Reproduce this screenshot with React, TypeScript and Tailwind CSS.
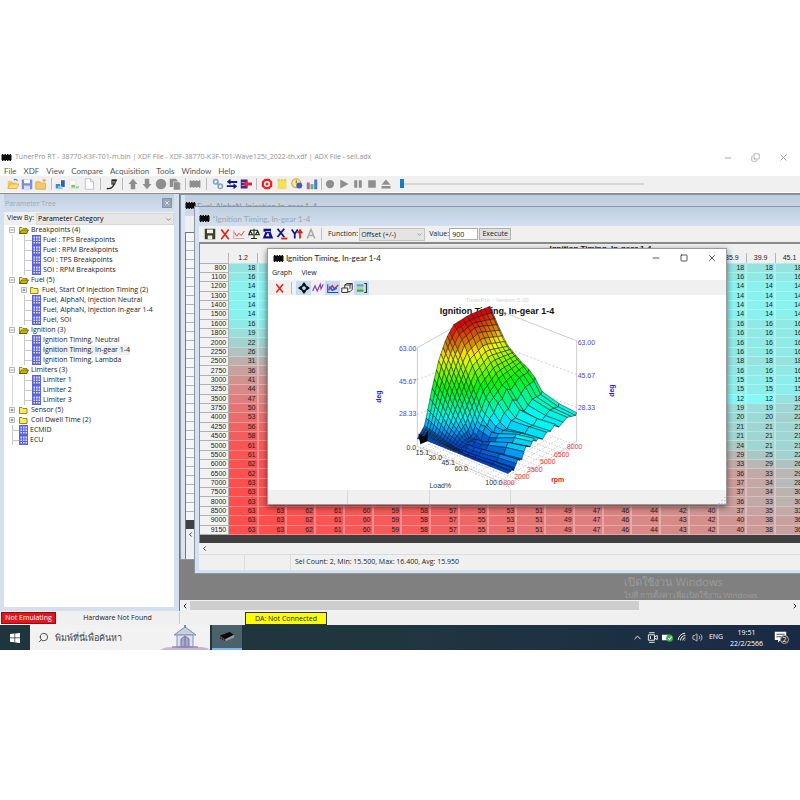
import React from 'react';
import { Search, ChevronDown, ChevronUp, ChevronLeft, ChevronRight, Minus, X, Square, Copy, Volume2, Wifi } from 'lucide-react';

const RPM = [800, 1100, 1200, 1300, 1400, 1500, 1600, 1800, 2000, 2250, 2500, 2750, 3000, 3250, 3500, 3750, 4000, 4250, 4500, 5000, 5500, 6000, 6500, 7000, 7500, 8000, 8500, 9000, 9150];
const COL_FIRST = [18, 16, 14, 14, 14, 14, 16, 19, 22, 26, 31, 36, 41, 44, 47, 50, 53, 56, 58, 61, 61, 62, 62, 63, 63, 63, 63, 63, 63];
const COL_35 = [18, 16, 14, 14, 14, 14, 16, 16, 16, 16, 18, 16, 15, 15, 12, 19, 20, 21, 21, 24, 29, 33, 36, 37, 37, 36, 37, 40, 40];
const COL_39 = [18, 16, 14, 14, 14, 14, 16, 16, 16, 16, 18, 16, 15, 15, 12, 19, 20, 21, 21, 21, 25, 29, 33, 34, 34, 33, 35, 38, 38];
const COL_45 = [18, 16, 14, 14, 14, 14, 16, 16, 16, 16, 18, 16, 15, 15, 18, 21, 22, 21, 21, 21, 22, 26, 29, 28, 30, 30, 33, 36, 36];
const FULL_ROWS: Record<number, number[]> = {
  8500: [63, 63, 62, 61, 60, 59, 58, 57, 55, 53, 51, 49, 47, 46, 44, 42, 40, 37, 35, 33],
  9000: [63, 63, 62, 61, 60, 59, 58, 57, 55, 53, 51, 49, 47, 46, 44, 43, 42, 40, 38, 36],
  9150: [63, 63, 62, 61, 60, 59, 58, 57, 55, 53, 51, 49, 47, 46, 44, 43, 42, 40, 38, 36],
};
const HEADERS = ['1.2', '', '', '', '', '', '', '', '', '', '', '', '', '', '', '', '', '35.9', '39.9', '45.1'];

const mix = (a: number[], b: number[], t: number) => `rgb(${a.map((c, i) => Math.round(c + (b[i] - c) * t)).join(',')})`;

const cellColor = (v: number) => {
  const cold = [130, 250, 246];
  const mid = [188, 178, 176];
  const hot = [254, 78, 78];
  return v < 30 ? mix(cold, mid, (v - 12) / 18) : mix(mid, hot, (v - 30) / 33);
};

const getRow = (i: number): { value: number; text: string }[] => {
  const full = FULL_ROWS[RPM[i]];
  if (full) return full.map((value) => ({ value, text: String(value) }));
  return HEADERS.map((_, c) => {
    if (c === 0) return { value: COL_FIRST[i], text: String(COL_FIRST[i]) };
    if (c === 17) return { value: COL_35[i], text: String(COL_35[i]) };
    if (c === 18) return { value: COL_39[i], text: String(COL_39[i]) };
    if (c === 19) return { value: COL_45[i], text: String(COL_45[i]) };
    return { value: COL_FIRST[i] + ((COL_35[i] - COL_FIRST[i]) * c) / 17, text: '' };
  });
};

/* ---------- surface plot ---------- */

const U_KEYS = [0, 0.1, 0.2, 0.36, 0.5, 0.58, 0.7, 1];
const V_KEYS = [0, 0.1, 0.2, 0.3, 0.4, 0.5, 0.7, 1];
const SURFACE = [
  [15, 16, 16, 16, 16, 16, 16, 16],
  [20, 19, 17, 15, 15, 15, 16, 17],
  [37, 31, 24, 17, 16, 17, 18, 20],
  [51, 42, 33, 17, 15, 17, 21, 24],
  [60, 51, 41, 25, 19, 19, 22, 24],
  [65, 58, 48, 33, 25, 22, 23, 24],
  [66, 61, 52, 40, 31, 26, 24, 25],
  [65, 56, 48, 42, 38, 31, 28, 26],
];
const U_GRID = [0, 0.03, 0.06, 0.09, 0.12, 0.15, 0.18, 0.21, 0.24, 0.27, 0.3, 0.33, 0.36, 0.4, 0.45, 0.52, 0.6, 0.8, 1];
const V_GRID = RPM.map((r) => (r - 800) / 8350);
const RIPPLE = [0, 0, 0, 1, 0, -1, 0, 1, 2, 0, -1, 1, 2, 0, -1, 1, 2, 0, 1, -1, 1, 0, 2, -1, 0, 1, 0, -1, 0];

const locate = (keys: number[], x: number) => {
  let i = 0;
  while (i < keys.length - 2 && x > keys[i + 1]) i++;
  return { i, t: (x - keys[i]) / (keys[i + 1] - keys[i]) };
};

const heightAt = (u: number, v: number) => {
  const a = locate(U_KEYS, u);
  const b = locate(V_KEYS, v);
  const lo = SURFACE[b.i][a.i] * (1 - a.t) + SURFACE[b.i][a.i + 1] * a.t;
  const hi = SURFACE[b.i + 1][a.i] * (1 - a.t) + SURFACE[b.i + 1][a.i + 1] * a.t;
  return lo * (1 - b.t) + hi * b.t;
};

const project = (u: number, v: number, z: number) => {
  const x = 417 + 91 * u + 73 * v - 4 * u * v;
  const y = 447 + 37 * u - 37 * v - 5 * u * v - (z - 11) * 1.92;
  return [x, y];
};

const toPoints = (list: number[][]) => list.map((p) => `${p[0].toFixed(1)},${p[1].toFixed(1)}`).join(' ');

const buildSurface = () => {
  const cells: { points: string; fill: string }[] = [];
  const z = (ui: number, vi: number) => heightAt(U_GRID[ui], V_GRID[vi]) + (U_GRID[ui] > 0.4 ? RIPPLE[vi] : 0);
  for (let vi = V_GRID.length - 2; vi >= 0; vi--) {
    for (let ui = 0; ui < U_GRID.length - 1; ui++) {
      const corners = [[ui, vi], [ui + 1, vi], [ui + 1, vi + 1], [ui, vi + 1]];
      const avg = corners.reduce((s, c) => s + z(c[0], c[1]), 0) / 4;
      const hue = Math.max(0, Math.min(222, 240 - ((avg - 12) / 52) * 240));
      const light = avg < 19 ? 42 : avg > 54 ? 44 : 49;
      cells.push({
        points: toPoints(corners.map((c) => project(U_GRID[c[0]], V_GRID[c[1]], z(c[0], c[1])))),
        fill: `hsl(${hue.toFixed(0)} 98% ${light}%)`,
      });
    }
  }
  return cells;
};

const CELLS = buildSurface();
const STEPS = [0, 0.08, 0.16, 0.24, 0.32, 0.4, 0.48, 0.56, 0.64, 0.72, 0.8, 0.88, 1];

const SurfacePlot = () => (
  <svg viewBox="267 295 460 196" className="block w-full bg-white" fontFamily='"Liberation Sans", Arial, sans-serif' fontSize="7" role="img" aria-label="Ignition timing surface">
    <text x="497" y="302" textAnchor="middle" fill="#d4d4d4" fontSize="6">TunerPro - Version 5.00</text>
    <text x="497" y="314" textAnchor="middle" fill="#111" fontSize="9" fontWeight="700">Ignition Timing, In-gear 1-4</text>
    <g stroke="#a9a9a9" strokeWidth="0.6" fill="none">
      <path d="M417 447V348L488 308M577 442V341L500 311" />
      <path d="M417 380L440 371M417 415L432 409M577 375L508 349M577 408L550 398" strokeDasharray="2 2" />
      {STEPS.map((s) => (
        <polyline key={`u${s}`} points={toPoints([project(s, 0, 9), project(s, 1, 9)])} strokeDasharray="1.5 1.5" />
      ))}
      {STEPS.map((s) => (
        <polyline key={`v${s}`} points={toPoints([project(0, s, 9), project(1.02, s, 9)])} strokeDasharray="1.5 1.5" />
      ))}
      <path d="M417 447L508 486L577 442" />
    </g>
    <g stroke="#04161c" strokeWidth="0.5" strokeLinejoin="round">
      {CELLS.map((c, i) => (
        <polygon key={i} points={c.points} fill={c.fill} />
      ))}
    </g>
    <path d="M418 434L424 437L428 430L427 442L420 445Z" fill="#05080f" />
    <g fill="#4646e0">
      <text x="416" y="351" textAnchor="end">63.00</text>
      <text x="416" y="384" textAnchor="end">45.67</text>
      <text x="416" y="417" textAnchor="end">28.33</text>
      <text x="578" y="345">63.00</text>
      <text x="578" y="378">45.67</text>
      <text x="578" y="411">28.33</text>
      <text transform="translate(380 397) rotate(-90)" textAnchor="middle" fontSize="7" fontWeight="700" fill="#2222d8">deg</text>
      <text transform="translate(615 391) rotate(-90)" textAnchor="middle" fontSize="7" fontWeight="700" fill="#2222d8">deg</text>
    </g>
    <g fill="#333" textAnchor="middle">
      <text x="411" y="451">0.0</text>
      <text x="422" y="456">15.1</text>
      <text x="435" y="461">30.0</text>
      <text x="448" y="466">45.1</text>
      <text x="461" y="472">60.0</text>
      <text x="494" y="486">100.0</text>
      <text x="440" y="489">Load%</text>
    </g>
    <g fill="#f04040" textAnchor="middle">
      <text x="509" y="486">800</text>
      <text x="522" y="480">2000</text>
      <text x="535" y="473">3500</text>
      <text x="548" y="465">5000</text>
      <text x="562" y="458">6500</text>
      <text x="575" y="450">8000</text>
      <text x="558" y="483" fontWeight="700" fill="#e01818">rpm</text>
    </g>
  </svg>
);

/* ---------- small shared parts ---------- */

const Icon: React.FC<{ children: React.ReactNode; className?: string }> = ({ children, className = 'size-3' }) => (
  <svg viewBox="0 0 16 16" className={`${className} shrink-0`} fill="none" aria-hidden="true">{children}</svg>
);

const Tool: React.FC<{ label: string; active?: boolean; wide?: boolean; children: React.ReactNode }> = ({ label, active, wide, children }) => (
  <button type="button" aria-label={label} className={`flex h-[14px] shrink-0 items-center justify-center ${wide ? 'w-[15px]' : 'w-[14px]'} ${active ? 'bg-[#c4dff5]' : ''}`}>
    <Icon>{children}</Icon>
  </button>
);

const Sep: React.FC<{ className?: string }> = ({ className = 'w-[6px]' }) => (
  <span className={`flex h-3 shrink-0 justify-center ${className}`}><span className="w-px bg-[#bdbdbd]" /></span>
);

const Chip = () => (
  <svg viewBox="0 0 22 14" className="h-[7px] w-[11px] shrink-0" aria-hidden="true">
    <path d="M1 2h20v10H1z" fill="#000" />
    <path d="M2 0h3v14H2zM7 0h3v14H7zM12 0h3v14h-3zM17 0h3v14h-3z" fill="#111" />
  </svg>
);

const GridIcon = () => (
  <svg viewBox="0 0 9 10" className="h-[10px] w-[9px] shrink-0" aria-hidden="true">
    <path d="M0 0h9v10H0z" fill="#5a60e0" />
    <path d="M1.500 1.500h1.500v2h-1.500zM4 1.500h1.500v2H4zM6.500 1.500H8v2H6.500zM1.500 4.500h1.500v1.500h-1.500zM4 4.500h1.500v1.500H4zM6.500 4.500H8v1.500H6.500zM1.500 7h1.500v1.500h-1.500zM4 7h1.500v1.500H4zM6.500 7H8v1.500H6.500z" fill="#dfe3ff" />
  </svg>
);

const FolderIcon: React.FC<{ open?: boolean }> = ({ open }) => (
  <svg viewBox="0 0 20 16" className="h-2 w-[10px] shrink-0" aria-hidden="true">
    <path d="M1 3h5l2 2h8v10H1z" fill="#f5ee62" stroke="#6b6500" strokeWidth="1.500" />
    {open && <path d="M5 8h14l-4 7H1z" fill="#c9b800" stroke="#4c4700" strokeWidth="1.500" />}
  </svg>
);

const MENU = ['File', 'XDF', 'View', 'Compare', 'Acquisition', 'Tools', 'Window', 'Help'];

const MainToolbar = () => (
  <div className="flex h-[17px] items-center border-b border-[#fafafa] bg-[#f0f0f0] pl-[6px]">
    <Tool label="Open"><path d="M1 4h5l2 2h5v8H1z" fill="#f1c65b" /><path d="M4 8h12l-3 6H1z" fill="#ffdc7c" stroke="#d9a536" /><path d="M9 3c2-2 4-1 5 1" stroke="#4d86c6" strokeWidth="1.500" /></Tool>
    <Tool label="Save"><path d="M1 2h14v13H1z" fill="#7b8bd6" /><path d="M4 2h8v5H4z" fill="#fff" /><path d="M4 10h8v5H4z" fill="#d7dcf5" /></Tool>
    <Tool label="Open definition"><path d="M1 5h6l2 2h5v8H1z" fill="#f4c968" stroke="#d9a536" /><path d="M12 1v5M10 3h5" stroke="#d9a536" strokeWidth="1.500" /></Tool>
    <Sep />
    <Tool label="Compare bins"><path d="M1 8h6v6H1z" fill="#3f8ec2" /><path d="M8 3h5v9H8z" fill="#2f5fa8" /><path d="M4 11h6v4H4z" fill="#8fd0d8" /></Tool>
    <Tool label="Difference"><path d="M1 3h8v11H1z" fill="#fff" stroke="#ddd" /><path d="M3 9h5v4H3z" fill="#7fc77f" /><path d="M9 11h4v3H9z" fill="#9ad09a" /></Tool>
    <Tool label="New"><path d="M3 1h7l4 4v10H3z" fill="#fff" stroke="#a9b2c0" /><path d="M10 1v4h4" stroke="#a9b2c0" /></Tool>
    <Sep className="w-[9px]" />
    <Tool label="Emulator"><path d="M7 2h8l-3 7H7z" fill="#4a4f48" /><path d="M1 14c5 1 8-1 10-6M8 3h6" stroke="#222" strokeWidth="1.800" /><path d="M8 5h4" stroke="#9fae9f" /></Tool>
    <Sep className="w-[7px]" />
    <Tool label="Upload"><path d="M8 1l6 7h-3v7H5V8H2z" fill="#8e8e8e" /></Tool>
    <Tool label="Download"><path d="M8 15l6-7h-3V1H5v7H2z" fill="#8e8e8e" /></Tool>
    <Tool label="Verify"><circle cx="8" cy="8" r="7" fill="#8e8e8e" /></Tool>
    <Tool label="Copy"><path d="M1 1h8l2 2v9H1z" fill="#8e8e8e" /><path d="M6 5h7l2 2v9H6z" fill="#8e8e8e" stroke="#d5d5d5" /></Tool>
    <Sep />
    <Tool label="Chip"><path d="M1 4h14v8H1z" fill="#8e8e8e" /><path d="M2 3v10M6 3v10M10 3v10M14 3v10" stroke="#8e8e8e" strokeWidth="2" /></Tool>
    <Sep className="w-[9px]" />
    <Tool label="Link"><circle cx="5" cy="5" r="3" stroke="#7da2c9" strokeWidth="2" /><circle cx="11" cy="11" r="3" stroke="#8aa4bf" strokeWidth="2" /><path d="M6 6l4 4" stroke="#7da2c9" strokeWidth="2" /></Tool>
    <Tool label="Swap"><path d="M1 5l5-4v3h9v2.500H6V9zM15 11l-5 4v-3H1V9.500h9V7z" fill="#16168a" /></Tool>
    <Tool label="Import"><path d="M1 2h9v12H1z" fill="#3a2a8a" /><path d="M2 6h7M2 10h7" stroke="#e8a0c0" /><path d="M4 8l6-5v3h6v4h-6v3z" fill="#e02048" /></Tool>
    <Sep />
    <Tool wide label="Acquire"><path d="M5 1h6l4 4v6l-4 4H5l-4-4V5z" fill="#e8262a" /><circle cx="8" cy="8" r="4" fill="#fff" /><circle cx="8" cy="8" r="2" fill="#e8262a" /></Tool>
    <Tool wide label="Notes"><path d="M2 2h12v13H2z" fill="#f2e061" /><path d="M4 1v3M8 1v3M12 1v3" stroke="#c9b130" /></Tool>
    <Tool wide label="Gauge"><circle cx="7" cy="7" r="6" fill="#f7e9a0" stroke="#d8a72c" strokeWidth="1.500" /><circle cx="11" cy="10" r="4" fill="#3f5fbf" /><path d="M7 3v4" stroke="#333" /></Tool>
    <Tool wide label="Histogram"><path d="M1 6h4v9H1z" fill="#b65fb0" /><path d="M6 8h4v7H6z" fill="#5dbf58" /><path d="M11 2h4v13h-4z" fill="#4b77d6" /></Tool>
    <Sep className="w-1" />
    <Tool label="Record"><circle cx="8" cy="8" r="5.500" fill="#8e8e8e" /></Tool>
    <Tool label="Play"><path d="M3 2l11 6-11 6z" fill="#8e8e8e" /></Tool>
    <Tool label="Pause"><path d="M3 3h4v10H3zM9 3h4v10H9z" fill="#8e8e8e" /></Tool>
    <Tool label="Stop"><path d="M3 3h10v10H3z" fill="#8e8e8e" /></Tool>
    <Tool label="Eject"><path d="M8 2l6 7H2zM2 10.500h12V14H2z" fill="#8e8e8e" /></Tool>
    <input
      type="range"
      aria-label="Playback position"
      defaultValue={0}
      className="ml-[7px] h-3 w-[244px] appearance-none bg-transparent [&::-webkit-slider-runnable-track]:h-[2px] [&::-webkit-slider-runnable-track]:bg-[#d6d6d6] [&::-webkit-slider-thumb]:-mt-[4px] [&::-webkit-slider-thumb]:h-[9px] [&::-webkit-slider-thumb]:w-1 [&::-webkit-slider-thumb]:appearance-none [&::-webkit-slider-thumb]:bg-[#1979ca]"
    />
  </div>
);

/* ---------- parameter tree ---------- */

type Node = { label: string; kind: 'open' | 'closed' | 'table'; children?: Node[]; selected?: boolean };

const TREE: Node[] = [
  { label: 'Breakpoints (4)', kind: 'open', children: [
    { label: 'Fuel : TPS Breakpoints', kind: 'table' },
    { label: 'Fuel : RPM Breakpoints', kind: 'table' },
    { label: 'SOI : TPS Breakpoints', kind: 'table' },
    { label: 'SOI : RPM Breakpoints', kind: 'table' },
  ] },
  { label: 'Fuel (5)', kind: 'open', children: [
    { label: 'Fuel, Start Of Injection Timing (2)', kind: 'closed' },
    { label: 'Fuel, AlphaN, Injection Neutral', kind: 'table' },
    { label: 'Fuel, AlphaN, Injection In-gear 1-4', kind: 'table' },
    { label: 'Fuel, SOI', kind: 'table' },
  ] },
  { label: 'Ignition (3)', kind: 'open', children: [
    { label: 'Ignition Timing, Neutral', kind: 'table' },
    { label: 'Ignition Timing, In-gear 1-4', kind: 'table', selected: true },
    { label: 'Ignition Timing, Lambda', kind: 'table' },
  ] },
  { label: 'Limiters (3)', kind: 'open', children: [
    { label: 'Limiter 1', kind: 'table' },
    { label: 'Limiter 2', kind: 'table' },
    { label: 'Limiter 3', kind: 'table' },
  ] },
  { label: 'Sensor (5)', kind: 'closed' },
  { label: 'Coil Dwell Time (2)', kind: 'closed' },
  { label: 'ECMID', kind: 'table' },
  { label: 'ECU', kind: 'table' },
];

const Expander: React.FC<{ open?: boolean; label: string }> = ({ open, label }) => (
  <button type="button" aria-label={`Toggle ${label}`} className="block size-[6px] shrink-0">
    <svg viewBox="0 0 6 6" className="size-[6px]" aria-hidden="true">
      <path d="M.5.5h5v5h-5z" fill="#fff" stroke="#b4b4b4" />
      <path d={open ? 'M1.500 3h3' : 'M1.500 3h3M3 1.500v3'} stroke="#666" strokeWidth="0.800" />
    </svg>
  </button>
);

const TreeRow: React.FC<{ node: Node; child?: boolean }> = ({ node, child }) => (
  <div className="flex h-[10px] items-center">
    {child && <span className="mr-2 h-[10px] w-px bg-[#d5d5d5]" />}
    {node.kind === 'table' ? (
      <span className={`flex h-[10px] items-center border-l border-[#c8c8c8] ${child ? 'ml-[3px] w-2' : 'w-[7px]'}`}><span className="h-px w-full bg-[#c8c8c8]" /></span>
    ) : (
      <span className={child ? 'mr-[3px]' : '-ml-[3px] mr-[4px]'}><Expander open={node.kind === 'open'} label={node.label} /></span>
    )}
    {node.kind === 'table' ? <GridIcon /> : <FolderIcon open={node.kind === 'open'} />}
    <span className={`ml-[2px] whitespace-nowrap leading-[10px] ${node.selected ? 'bg-[#f0f0f0]' : ''}`}>{node.label}</span>
  </div>
);

const ParameterTree = () => (
  <aside className="flex w-[180px] shrink-0 flex-col border-r border-[#777] bg-[#d5e0ee] pb-1 pl-1 pr-[5px]">
    <div className="flex h-[18px] items-center justify-between bg-linear-to-b from-[#bfcddd] to-[#d5e0ee] pr-[2px]">
      <h2 className="pl-px pt-[2px] text-[7px] text-[#9aa8ba]">Parameter Tree</h2>
      <button type="button" aria-label="Close panel" className="flex size-[10px] items-center justify-center border border-[#8693a6] bg-[#98a5b8] text-white"><X size={6} strokeWidth={3} /></button>
    </div>
    <div className="flex h-[13px] items-center bg-[#f0f0f0]">
      <label htmlFor="view-by" className="w-[32px] pl-[3px] text-[7px] whitespace-nowrap">View By:</label>
      <div className="relative flex-1">
        <select id="view-by" className="block h-3 w-full appearance-none border border-[#d6d6d6] bg-[#e6e6e6] px-px text-[7px] leading-[10px] text-black">
          <option>Parameter Category</option>
        </select>
        <ChevronDown size={7} className="pointer-events-none absolute right-[2px] top-[3px] text-[#555]" />
      </div>
    </div>
    <ul className="flex-1 bg-white pl-2 text-[7px] text-[#222]">
      {TREE.map((node) => (
        <li key={node.label}>
          <TreeRow node={node} />
          {node.children && (
            <ul>
              {node.children.map((c) => (
                <li key={c.label}><TreeRow node={c} child /></li>
              ))}
            </ul>
          )}
        </li>
      ))}
    </ul>
  </aside>
);

/* ---------- MDI windows ---------- */

const FuelWindow = () => (
  <section className="absolute -right-3 left-0 top-0 flex h-[366px] flex-col border border-[#8b97a6] bg-[#d9e4f2] pl-1">
    <div className="flex h-[21px] shrink-0 items-center gap-px bg-linear-to-b from-[#c0cddc] to-[#cfdbe9] font-['Lato','Open_Sans',sans-serif] text-[8px] text-[#8292a5]">
      <Chip />
      <h2>Fuel, AlphaN, Injection In-gear 1-4</h2>
    </div>
    <div className="h-4 shrink-0 bg-[#f0f0f0]" />
    <div className="flex flex-1 flex-col border-l border-t border-[#777]">
      <div className="h-[287px] bg-[repeating-linear-gradient(to_bottom,#f6f6f6_0_8px,#b4b4b4_8px_9px)]" />
      <div className="h-[9px] bg-[#404040]" />
      <div className="flex h-[11px] items-center bg-[#f0f0f0] pl-px"><ChevronLeft size={7} strokeWidth={3} /></div>
      <div className="flex-1 bg-[#f0f0f0]" />
    </div>
  </section>
);

const TableToolbar = () => (
  <div className="flex h-4 shrink-0 items-center bg-[#f0f0f0] pl-1">
    <Tool label="Save table"><path d="M1 1h14v14H1z" fill="#3b421c" /><path d="M4 2h8v5H4z" fill="#f2f2f2" /><path d="M5 10h6v5H5z" fill="#eee" /></Tool>
    <Tool wide label="Close table"><path d="M3 2l10 13M13 2L3 15" stroke="#e3201b" strokeWidth="2.200" /></Tool>
    <Tool label="Plot row"><path d="M1 3v11h14" stroke="#d88" /><path d="M2 6l3 5 3-4 3 3 4-6" stroke="#e04040" strokeWidth="1.300" /></Tool>
    <Tool wide label="Compare"><path d="M8 1v13M3 3h10M4 14h8M3 4L1 9h5L3 4zM13 4l-3 5h5z" stroke="#1d2b1d" strokeWidth="1.500" /></Tool>
    <Tool label="Calculate"><path d="M2 1h10v4H2zM5 4L1 14h14L11 4z" fill="#11118a" /><path d="M8 6l2 5H5z" fill="#fff" /></Tool>
    <Tool label="Edit X axis"><path d="M2 1l9 11M11 1L2 12" stroke="#14148c" strokeWidth="2.500" /><path d="M7 14h8" stroke="#e01c1c" strokeWidth="2.500" /></Tool>
    <Tool wide label="Edit Y axis"><path d="M1 2l4 6 4-6M5 8v6" stroke="#14148c" strokeWidth="2.300" /><path d="M12 14V4M9 7l3-4 3 4" stroke="#e01c1c" strokeWidth="2.300" /></Tool>
    <Tool label="Font"><path d="M3 14L8 2l5 12M5 10h6" stroke="#a8a8a8" strokeWidth="2" /></Tool>
    <Sep className="w-[6px]" />
    <label htmlFor="fn" className="ml-1 text-[7px]">Function:</label>
    <div className="relative ml-px w-[66px]">
      <select id="fn" className="block h-[13px] w-full appearance-none border border-[#c4c4c4] bg-[#e4e4e4] px-px text-[7px] leading-[11px] text-[#222]">
        <option>Offset (+/-)</option>
      </select>
      <ChevronDown size={7} className="pointer-events-none absolute right-[2px] top-[3px] text-[#777]" />
    </div>
    <label htmlFor="val" className="ml-1 w-[20px] whitespace-nowrap text-[7px]">Value:</label>
    <input id="val" type="text" defaultValue="900" className="h-3 w-[29px] border border-[#ababab] bg-white px-[2px] text-[7px] leading-[10px]" />
    <button type="button" className="ml-px h-3 w-8 border border-[#b0b0b0] bg-[#e1e1e1] text-[7px] leading-[10px]">Execute</button>
  </div>
);

const TimingTable = () => (
  <table className="h-[282px] w-[605px] table-fixed border-collapse text-right font-['Liberation_Sans',Arial,sans-serif] text-[7px] leading-[8px] text-[#222]">
    <thead>
      <tr className="h-[10px] bg-[#f0f0f0]">
        <td className="border-r border-[#b5b5b5] p-0" />
        {HEADERS.map((h, i) => (
          <th key={i} scope="col" className="border-r border-[#b5b5b5] p-0 text-center font-normal">{h}</th>
        ))}
      </tr>
    </thead>
    <tbody>
      {RPM.map((rpm, i) => (
        <tr key={rpm}>
          <th scope="row" className="border-y border-r border-[#b0b0b0] bg-[#f2f2f2] p-0 pr-[2px] text-right font-normal">{rpm}</th>
          {getRow(i).map((cell, c) => (
            <td key={c} className="border-y border-r-2 border-white/30 p-0 pr-px" style={{ backgroundColor: cellColor(cell.value) }}>{cell.text}</td>
          ))}
        </tr>
      ))}
    </tbody>
  </table>
);

const IgnitionWindow = () => (
  <section className="absolute -right-5 left-[14px] top-3 flex h-[368px] flex-col border border-[#8b97a6] bg-[#d6e1ef] pb-[3px] pl-1">
    <div className="flex h-[19px] shrink-0 items-center gap-[2px] bg-linear-to-b from-[#bfcedc] to-[#d3dff0] pt-[4px] font-['Lato','Open_Sans',sans-serif] text-[8px] text-[#9aa7b6]">
      <Chip />
      <h2>*Ignition Timing, In-gear 1-4</h2>
    </div>
    <TableToolbar />
    <div className="shrink-0 overflow-hidden border-l border-t-2 border-[#8a8a8a] bg-[#404040] pb-2">
      <div className="h-[9px] bg-[#f0f0f0] pl-[182px] text-center font-['Liberation_Sans',Arial,sans-serif] text-[8px] font-bold leading-[9px]">Ignition Timing, In-gear 1-4</div>
      <TimingTable />
    </div>
    <div className="flex h-[11px] shrink-0 items-center bg-[#f0f0f0] pl-[2px]"><ChevronLeft size={7} strokeWidth={3} /></div>
    <div className="flex flex-1 items-center border-t border-[#dcdcdc] bg-[#f0f0f0] text-[7px]">
      <span className="h-full w-[46px] border-r border-[#dcdcdc]" />
      <span className="h-full w-[46px] border-r border-[#dcdcdc]" />
      <span className="pl-1">Sel Count: 2, Min: 15.500, Max: 16.400, Avg: 15.950</span>
    </div>
  </section>
);

const GraphWindow = () => (
  <section className="absolute left-[87px] top-[54px] w-[460px] border border-[#9a9a9a] bg-white shadow-[0_2px_6px_rgba(0,0,0,0.55)]">
    <div className="flex h-[18px] items-center gap-[2px] pl-[5px] font-['Lato','Open_Sans',sans-serif] text-[8px] text-[#222]">
      <Chip />
      <h2>Ignition Timing, In-gear 1-4</h2>
      <div className="ml-auto flex gap-[18px] pr-[9px] text-[#333]">
        <button type="button" aria-label="Minimize"><Minus size={10} strokeWidth={2} /></button>
        <button type="button" aria-label="Maximize" className="px-px"><Square size={8} strokeWidth={2.5} /></button>
        <button type="button" aria-label="Close"><X size={10} strokeWidth={2} /></button>
      </div>
    </div>
    <div className="flex h-[13px] items-center gap-[9px] pl-1 text-[7px]">
      <button type="button">Graph</button>
      <button type="button">View</button>
    </div>
    <div className="flex h-[15px] items-center bg-[#f0f0f0] pl-[5px]">
      <Tool label="Close graph"><path d="M3 3l9 11M12 3L3 14" stroke="#e3201b" strokeWidth="2" /></Tool>
      <Sep className="w-[9px]" />
      <Tool wide active label="Move"><path d="M8 0l3 4H5zM8 16l3-4H5zM0 8l4-3v6zM16 8l-4-3v6z" fill="#111" /><circle cx="8" cy="8" r="3.500" stroke="#111" strokeWidth="2" /></Tool>
      <Tool label="Trace"><path d="M1 12l3-7 3 7 4-9 1 6 3-6" stroke="#8a3fb8" strokeWidth="1.600" /></Tool>
      <Tool wide active label="Surface"><path d="M1 3v11h14" stroke="#3344bb" strokeWidth="1.500" /><path d="M2 11l5-6 3 4 5-5" stroke="#d02a50" strokeWidth="2" /><path d="M3 6l4 5 6-3" stroke="#3154d8" strokeWidth="2" /></Tool>
      <Tool label="Projection"><path d="M1 8h8v6H1zM5 8V4l3-2h7v8l-3 3H9M5 4h7v5M12 4l3-2" stroke="#333" strokeWidth="1.300" /></Tool>
      <Tool wide active label="Legend"><path d="M1 3h9v3H1z" fill="#56a8c8" /><path d="M1 7h9v2H1z" fill="#c8cf4a" /><path d="M1 10h9v3H1z" fill="#47a060" /><path d="M11 2h3v12h-3" stroke="#333" strokeWidth="1.500" /></Tool>
    </div>
    <SurfacePlot />
    <div className="flex h-[14px] bg-[#f0f0f0]">
      <span className="w-[80px] border-r border-[#d8d8d8]" />
      <span className="w-[82px] border-r border-[#d8d8d8]" />
      <span className="w-[81px] border-r border-[#d8d8d8]" />
      <svg viewBox="0 0 8 8" className="ml-auto size-2 self-end" aria-hidden="true"><path d="M7 1v1M7 4v1M4 4v1M7 7v1M4 7v1M1 7v1" stroke="#aaa" /></svg>
    </div>
  </section>
);

const Workspace = () => (
  <main className="flex min-w-0 flex-1 flex-col">
    <div className="relative h-[406px] overflow-hidden bg-[#808080]">
      <FuelWindow />
      <IgnitionWindow />
      <GraphWindow />
      <div className="absolute left-[444px] top-[380px] whitespace-nowrap text-[#9c9c9c]">
        <p className="text-[11px] leading-4">เปิดใช้งาน Windows</p>
        <p className="text-[8px] leading-[10px]">ไปที่ การตั้งค่า เพื่อเปิดใช้งาน Windows</p>
      </div>
    </div>
    <div className="flex h-[11px] items-center bg-[#f0f0f0]">
      <button type="button" aria-label="Scroll left" className="flex w-[10px] justify-center"><ChevronLeft size={8} strokeWidth={3} /></button>
      <span className="h-[9px] w-[449px] bg-[#cdcdcd]" />
      <button type="button" aria-label="Scroll right" className="ml-auto flex w-[10px] justify-center"><ChevronRight size={8} strokeWidth={3} /></button>
    </div>
  </main>
);

const StatusBar = () => (
  <footer className="flex h-[14px] items-center bg-[#f0f0f0] text-[7px]">
    <span className="ml-px h-3 w-[55px] border border-[#8c1010] bg-[#e3141e] text-center leading-[10px] text-white">Not Emulating</span>
    <span className="h-3 w-[124px] border-r border-[#c8c8c8] text-center leading-3">Hardware Not Found</span>
    <span className="ml-[65px] h-[13px] w-[82px] border border-[#333] bg-[#fbfb0a] text-center leading-[11px]">DA: Not Connected</span>
  </footer>
);

const Taskbar = () => (
  <nav className="flex h-[25px] items-stretch bg-linear-to-r from-[#1f343d] via-[#20363f] to-[#1a2a45] text-white">
    <button type="button" aria-label="Start" className="flex w-[30px] items-center justify-center">
      <svg viewBox="0 0 10 10" className="size-[10px]" aria-hidden="true"><path d="M0 1l4.500-.5v4H0zM5.200.4L10 0v4.500H5.200zM0 5.200h4.500v4L0 8.800zM5.200 5.200H10V10l-4.800-.5z" fill="#fff" /></svg>
    </button>
    <label className="flex w-[180px] items-center bg-[#f2f2f2] pl-2 text-[#333]">
      <Search size={11} strokeWidth={1.800} className="-scale-x-100" />
      <input type="text" aria-label="Search" placeholder="พิมพ์ที่นี่เพื่อค้นหา" className="ml-[6px] w-[105px] bg-transparent text-[9px] placeholder:text-[#444]" />
      <svg viewBox="0 0 50 25" className="ml-auto h-[25px] w-[50px]" aria-hidden="true">
        <path d="M0 25c6-4 12-2 16-3h22c4 0 9 0 12 3z" fill="#c4b6d8" />
        <path d="M14 10L25 2l11 8z" fill="#c9cfe2" stroke="#8088ac" />
        <path d="M24 0h2v3h-2z" fill="#8088ac" />
        <path d="M17 10h16v12H17z" fill="#dcdfee" stroke="#8990b2" />
        <path d="M21 22v-8l4-3 4 3v8zM25 12v10" fill="#a9a5cb" stroke="#6f76a0" />
        <path d="M12 22h26" stroke="#9a86b8" strokeWidth="1.500" />
      </svg>
    </label>
    <button type="button" aria-label="TunerPro RT" className="ml-[2px] flex w-[30px] items-center justify-center border-b-2 border-[#76b9ed] bg-[#4b626b]">
      <svg viewBox="0 0 18 12" className="h-[11px] w-4" aria-hidden="true"><path d="M1 5l11-4 5 3-10 5z" fill="#0b0b0b" /><path d="M7 9l10-5v3L8 11z" fill="#9b9b9b" /><path d="M2 6v3M4 7v3M6 8v3" stroke="#222" /></svg>
    </button>
    <div className="ml-auto flex items-center text-[8px]">
      <button type="button" aria-label="Show hidden icons" className="flex w-[15px] justify-center"><ChevronUp size={11} /></button>
      <button type="button" aria-label="Meet now" className="flex w-[15px] justify-center">
        <Icon className="size-[11px]"><path d="M3 1h8M3 15h8M2 4h9v8H2zM11 7l4-2v6l-4-2M5 6v4" stroke="#fff" strokeWidth="1.300" /></Icon>
      </button>
      <button type="button" aria-label="Battery" className="flex w-[15px] justify-center">
        <Icon className="size-[11px]"><path d="M0 4h12v8H0z" fill="#fff" /><circle cx="11" cy="9" r="5" fill="#37b34a" /><path d="M9 9l2 2 3-4" stroke="#fff" strokeWidth="1.500" /></Icon>
      </button>
      <button type="button" aria-label="Network" className="flex w-[15px] justify-center"><Wifi size={11} className="-rotate-45" /></button>
      <button type="button" aria-label="Volume" className="flex w-[15px] justify-center"><Volume2 size={11} strokeWidth={1.500} /></button>
      <span className="w-[22px] text-center text-[7px]">ENG</span>
      <div className="w-[39px] text-center text-[7px] leading-[11px]">
        <time className="block">19:51</time>
        <time className="block">22/2/2566</time>
      </div>
      <button type="button" aria-label="Notifications" className="relative ml-1 mr-[10px] flex w-[20px] justify-center">
        <Icon className="size-[13px]"><path d="M1 1h14v10H8l-3 3v-3H1z" fill="#fff" /><path d="M3 4h10M3 7h7" stroke="#1b2b40" /></Icon>
        <span className="absolute left-[10px] top-1 flex size-[9px] items-center justify-center rounded-full border border-[#aaa] bg-[#333] text-[7px] leading-none">2</span>
      </button>
    </div>
  </nav>
);

const App: React.FC = () => (
  <div className="min-h-screen overflow-hidden bg-white py-[150px] font-['Open_Sans','Noto_Sans',sans-serif] text-[#222]">
    <header>
      <div className="flex h-[15px] items-center gap-[3px] pl-[1px] text-[7px] text-[#909090]">
        <Chip />
        <h1 className="whitespace-nowrap">TunerPro RT - 38770-K3F-T01-m.bin | XDF File - XDF-38770-K3F-T01-Wave125i_2022-th.xdf | ADX File - sell.adx</h1>
        <div className="ml-auto flex items-center gap-[18px] pr-[11px] text-[#999]">
          <button type="button" aria-label="Minimize"><Minus size={10} /></button>
          <button type="button" aria-label="Restore"><Copy size={9} className="-scale-y-100" /></button>
          <button type="button" aria-label="Close"><X size={11} /></button>
        </div>
      </div>
      <div className="flex h-[11px] items-center gap-[7px] pl-[4px] font-['Lato','Open_Sans',sans-serif] text-[8px] text-[#555]">
        {MENU.map((m) => (
          <button key={m} type="button">{m}</button>
        ))}
      </div>
      <MainToolbar />
    </header>
    <div className="flex border-t border-[#8c8c8c]">
      <ParameterTree />
      <Workspace />
    </div>
    <StatusBar />
    <Taskbar />
  </div>
);

export default App;
